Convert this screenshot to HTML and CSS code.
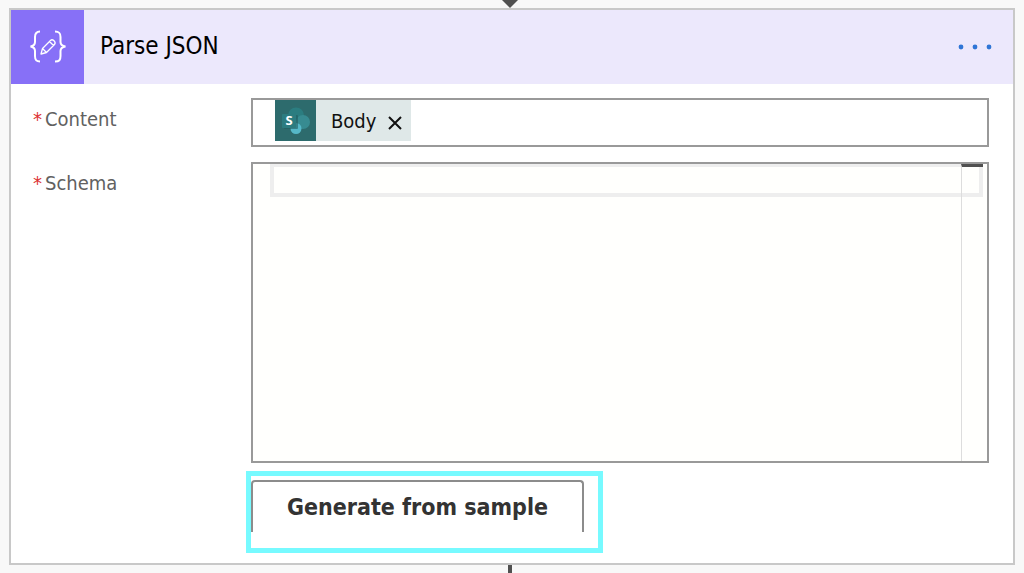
FILE: index.html
```
<!DOCTYPE html>
<html lang="en">
<head>
<meta charset="utf-8">
<title>Parse JSON</title>
<link rel="stylesheet" href="styles.css">
</head>
<body>
<div class="connector-in"><svg width="20" height="8" viewBox="0 0 20 8" aria-hidden="true"><path d="M2 0H18L10 8Z" fill="#505050"/></svg></div>
<main class="card">
  <header class="card-header">
    <div class="card-icon">
      <svg width="38" height="34" viewBox="0 0 38 34" fill="none" stroke="#fff" aria-hidden="true">
        <path d="M11 1.500C7 1.500 6 3.500 6 7V12C6 15 4.500 16 1.500 16.500C4.500 17 6 18 6 21V26C6 30 7 31.500 11 31.500" stroke-width="2"/>
        <path d="M26 1.500C30.500 1.500 31.500 3.500 31.500 7V12C31.500 15 33 16 36.500 16.500C33 17 31.500 18 31.500 21V26C31.500 30 30.500 31.500 26 31.500" stroke-width="2"/>
        <path d="M12 24L13.500 18.500L21.500 10.500C23.500 8.500 27.500 12 25.500 14.500L17.500 22.500ZM13.500 18.500L17.500 22.500M20.500 11.500L24.500 15.500" stroke-width="1.300" stroke-linejoin="round"/>
      </svg>
    </div>
    <h1 class="card-title">Parse JSON</h1>
    <button class="menu" type="button" aria-label="More options"><svg width="34" height="6" viewBox="0 0 34 6" fill="#2f75d6" aria-hidden="true"><circle cx="3" cy="3" r="2.400"/><circle cx="17" cy="3" r="2.400"/><circle cx="31" cy="3" r="2.400"/></svg></button>
  </header>
  <form class="card-body">
    <div class="field">
      <label class="field-label" for="content"><span class="required">*</span>Content</label>
      <div class="token-box">
        <span class="token">
          <svg class="token-icon" width="41" height="41" viewBox="0 0 41 41" aria-hidden="true">
            <rect width="41" height="41" fill="#2d6b6d"/>
            <circle cx="21" cy="15.500" r="8" fill="#2b7d80"/>
            <circle cx="28" cy="22" r="7" fill="#378b91"/>
            <circle cx="21" cy="28.500" r="5.500" fill="#55b8c8"/>
            <rect x="9" y="15" width="14" height="14" rx="1" fill="#215b5f" opacity=".6"/>
            <rect x="7" y="14" width="14" height="14" rx="1" fill="#2c7c80"/>
            <text class="logo-letter" x="14" y="25" text-anchor="middle">S</text>
          </svg>
          <span class="token-name">Body</span>
          <button class="token-remove" type="button" aria-label="Remove Body"><svg width="14" height="14" viewBox="0 0 14 14" aria-hidden="true"><path d="M1 1L13 13M13 1L1 13" stroke="#111" stroke-width="2"/></svg></button>
        </span>
        <input class="token-input" id="content" type="text">
      </div>
    </div>
    <div class="field">
      <label class="field-label" for="schema"><span class="required">*</span>Schema</label>
      <div class="editor">
        <textarea class="editor-text" id="schema" spellcheck="false"></textarea>
        <div class="current-line"></div>
        <div class="ruler"></div>
      </div>
    </div>
    <div class="field">
      <div class="highlight"><button class="generate" type="button">Generate from sample</button></div>
    </div>
  </form>
</main>
<div class="connector-out"></div>
</body>
</html>
```
FILE: styles.css
```
* { box-sizing: border-box; }
body {
  margin: 0;
  background: #f8f8f8;
  font-family: "DejaVu Sans Condensed", "Noto Sans", sans-serif;
  overflow: hidden;
}
button { padding: 0; border: 0; background: none; font: inherit; }
svg { display: block; }
.connector-in { display: flex; justify-content: center; height: 8px; padding-right: 4px; }
.card { margin: 0 9px; border: 2px solid #c8c8c8; background: #fff; }
.card-header { display: flex; align-items: center; height: 74px; background: #ece8fc; }
.card-icon { display: flex; align-items: center; justify-content: center; width: 73px; height: 74px; background: #8770f7; }
.card-title { flex: 1; margin: 0 0 0 16px; padding-bottom: 2px; font-size: 24px; font-weight: 400; line-height: 28px; color: #000; }
.menu { margin-right: 21px; }
.card-body { display: flex; flex-direction: column; gap: 15px; padding: 14px 24px 0 22px; }
.field { display: flex; }
.field-label { flex: none; width: 218px; padding-top: 8px; font-size: 20px; line-height: 26px; color: #616161; }
.required { margin-right: 3px; color: #dc3232; }
.token-box { display: flex; flex: 1; height: 49px; padding-left: 22px; border: 2px solid #999; }
.token { display: flex; align-items: center; height: 41px; background: #dfe8e8; }
.token-name { margin: 0 12px 0 15px; font-size: 20px; line-height: 26px; color: #111; }
.token-remove { margin: 5px 9px 0 0; }
.logo-letter { font: bold 13px "Noto Sans", sans-serif; fill: #fff; }
.token-input { flex: 1; min-width: 0; border: 0; outline: 0; background: none; font: inherit; }
.editor { position: relative; flex: 1; height: 301px; border: 2px solid #999; background: #fffffd; }
.editor-text { display: block; width: 100%; height: 100%; padding: 4px 60px 4px 22px; border: 0; outline: 0; resize: none; background: none; font: 20px/26px "DejaVu Sans Mono", monospace; }
.current-line { position: absolute; top: 0; left: 17px; right: 4px; height: 33px; border: 4px solid #eee; border-top-width: 3px; pointer-events: none; }
.ruler { position: absolute; top: 0; bottom: 0; right: 4px; width: 22px; border-left: 1px solid #ddd; border-top: 3px solid #505050; pointer-events: none; }
.highlight { margin: -7px 0 10px 213px; padding: 4px 14px 16px 0; border: 5px solid #77faff; }
.generate { height: 52px; padding: 0 34px; border: 2px solid #8c8c8c; border-bottom: 0; border-radius: 4px 4px 0 0; font-size: 23px; font-weight: 700; line-height: 28px; color: #333; }
.connector-out { width: 4px; height: 9px; margin: 0 auto; background: #505050; position: relative; right: 2px; }
```
